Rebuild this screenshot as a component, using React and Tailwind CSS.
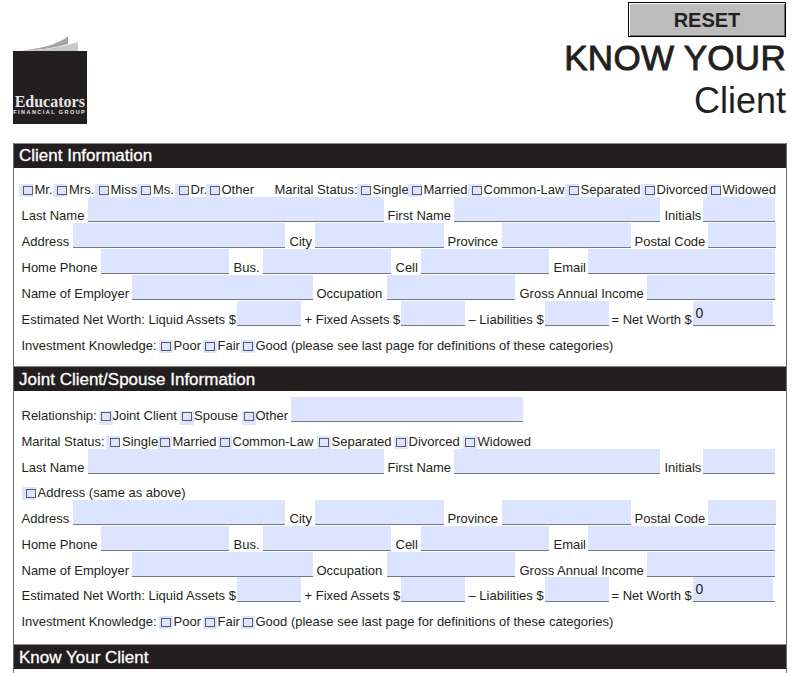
const blue = "bg-[#dde4ff]";

function Field({ className = "", children }) {
  return (
    <div className={`h-[25px] mb-[1px] shrink-0 border-b-[1.5px] border-[#77777f] ${blue} ${className}`}>
      {children}
    </div>
  );
}

function Label({ className = "", children }) {
  return <span className={`shrink-0 whitespace-nowrap ${className}`}>{children}</span>;
}

// tall: blue patch hangs below the row, center: mark sits in the middle of the patch
function Check({ className = "", label, tall, center }) {
  const patch = tall
    ? "justify-center h-[14.5px] pt-[1px] mr-0 mb-[-2px]"
    : center
      ? "justify-center h-[13px] pt-[1.5px] mr-[1px]"
      : "justify-end h-[13px] pt-[1.5px] mr-[2px]";
  return (
    <span className={`flex items-end shrink-0 whitespace-nowrap ${className}`}>
      <span className={`flex items-start w-[14px] shrink-0 ${blue} ${patch}`}>
        <span className="block w-[10px] h-[9.5px] border border-[#5a5a62]" />
      </span>
      {label}
    </span>
  );
}

function Row({ className = "", children }) {
  return <div className={`flex items-end h-[26px] ${className}`}>{children}</div>;
}

function SectionBar({ title, className = "leading-[24px]" }) {
  return (
    <div className={`h-[25px] bg-[#231f20] border-t border-[#8a8a8a] pl-[5px] text-white text-[17px] whitespace-nowrap [-webkit-text-stroke:0.3px_#ffffff] ${className}`}>
      {title}
    </div>
  );
}

function NameRow() {
  return (
    <Row>
      <Label className="w-[66px]">Last Name</Label>
      <Field className="w-[296px]" />
      <Label className="w-[70px] pl-[4px]">First Name</Label>
      <Field className="w-[206px]" />
      <Label className="w-[43px] pl-[5px]">Initials</Label>
      <Field className="w-[72px]" />
    </Row>
  );
}

function ContactRows() {
  return (
    <>
      <Row>
        <Label className="w-[51px]">Address</Label>
        <Field className="w-[212px]" />
        <Label className="w-[30px] pl-[5px]">City</Label>
        <Field className="w-[129px]" />
        <Label className="w-[58px] pl-[4px]">Province</Label>
        <Field className="w-[129px]" />
        <Label className="w-[77px] pl-[4px]">Postal Code</Label>
        <Field className="w-[68px]" />
      </Row>
      <Row>
        <Label className="w-[79px]">Home Phone</Label>
        <Field className="w-[128px]" />
        <Label className="w-[34px] pl-[5px]">Bus.</Label>
        <Field className="w-[128px]" />
        <Label className="w-[30px] pl-[5px]">Cell</Label>
        <Field className="w-[128px]" />
        <Label className="w-[39px] pl-[5px]">Email</Label>
        <Field className="w-[187px]" />
      </Row>
      <Row>
        <Label className="w-[110px]">Name of Employer</Label>
        <Field className="w-[181px]" />
        <Label className="w-[74px] pl-[4px]">Occupation</Label>
        <Field className="w-[128px]" />
        <Label className="w-[132px] pl-[5px]">Gross Annual Income</Label>
        <Field className="w-[128px]" />
      </Row>
    </>
  );
}

function WorthRows({ className = "" }) {
  return (
    <div className={className}>
      <Row>
        <Label className="w-[215px]">Estimated Net Worth: Liquid Assets $</Label>
        <Field className="w-[64px]" />
        <Label className="w-[100px] pl-[4px]">+ Fixed Assets $</Label>
        <Field className="w-[64px]" />
        <Label className="w-[80px] pl-[4px]">– Liabilities $</Label>
        <Field className="w-[64px]" />
        <Label className="w-[84px] pl-[3px]">= Net Worth $</Label>
        <div className="w-[82px] h-[25px] mb-[1px] shrink-0 border-b-[1.5px] border-[#77777f]">
          <div className={`w-[80px] h-[23.5px] pl-[3px] pt-[5px] text-[14px] leading-[14px] ${blue}`}>0</div>
        </div>
      </Row>
      <Row>
        <Label className="w-[137px]">Investment Knowledge:</Label>
        <Check className="w-[44px]" label="Poor" center />
        <Check className="w-[38px]" label="Fair" center />
        <Check label="Good (please see last page for definitions of these categories)" center />
      </Row>
    </div>
  );
}

function Logo() {
  return (
    <div className="w-[73.5px] mt-[35.5px]">
      <svg width="74" height="15" viewBox="0 0 74 15" className="block">
        <path d="M10 15 C30 14 50 11 65 6 L65 15 Z" fill="#c4c9cc" />
        <path d="M5 15 C25 13 45 9 55 0 L55 8 C45 11 30 14 5 15 Z" fill="#a3a5a7" />
      </svg>
      <div className="h-[73.5px] bg-[#231f20] flex flex-col justify-end items-center pb-[8px] text-[#e8e8e8]">
        <span className="font-['Liberation_Serif',serif] font-bold text-[16px] leading-[15px]">Educators</span>
        <span className="text-[5.5px] font-bold tracking-[1.45px] leading-[7px] whitespace-nowrap">FINANCIAL GROUP</span>
      </div>
    </div>
  );
}

export default function App() {
  return (
    <div className="w-[800px] h-[673px] overflow-hidden bg-white text-[#231f20] text-[13px] leading-[15px] font-['Liberation_Sans',Arial,sans-serif]">
      {/* Top: logo and title */}
      <div className="flex justify-between h-[143px] pl-[13px] pr-[14px]">
        <Logo />
        <div className="flex flex-col items-end pt-[2px]">
          <button className="w-[158px] h-[35px] border border-black bg-[#bdbdbd] shadow-[inset_1px_1px_0_#ffffff,inset_-1px_-1px_0_#6e6e6e] text-[20px] font-bold leading-[30px] text-center">
            RESET
          </button>
          <div className="mt-[1px] text-[35px] tracking-[0.3px] leading-[40px] whitespace-nowrap [-webkit-text-stroke:0.9px_#231f20]">KNOW YOUR</div>
          <div className="mt-[2px] text-[36px] leading-[42px] whitespace-nowrap">Client</div>
        </div>
      </div>

      <div className="ml-[13px] w-[774px] border-x-[1.5px] border-[#6b6b6b]">
        <SectionBar title="Client Information" />
        <div className="pl-[7.5px] pt-[3px] pb-[13px]">
          <Row className="ml-[-3px]">
            <Check className="w-[34.5px]" label="Mr." />
            <Check className="w-[41.5px]" label="Mrs." />
            <Check className="w-[42.5px]" label="Miss" />
            <Check className="w-[37.5px]" label="Ms." />
            <Check className="w-[31px]" label="Dr." />
            <Check className="w-[69px]" label="Other" />
            <Label className="w-[82px]">Marital Status:</Label>
            <Check className="w-[51px]" label="Single" />
            <Check className="w-[60px]" label="Married" />
            <Check className="w-[97px]" label="Common-Law" />
            <Check className="w-[76px]" label="Separated" />
            <Check className="w-[66px]" label="Divorced" />
            <Check label="Widowed" />
          </Row>
          <NameRow />
          <ContactRows />
          <WorthRows />
        </div>

        <SectionBar title="Joint Client/Spouse Information" className="leading-[25px]" />
        <div className="pl-[7.5px] pt-[6px] pb-[15px]">
          <Row>
            <Label className="w-[77px]">Relationship:</Label>
            <Check className="w-[81.5px]" label="Joint Client" tall />
            <Check className="w-[61.5px]" label="Spouse" tall />
            <Check className="w-[49px]" label="Other" tall />
            <Field className="w-[232px]" />
          </Row>
          <Row>
            <Label className="w-[84.5px]">Marital Status:</Label>
            <Check className="w-[51.5px]" label="Single" />
            <Check className="w-[60px]" label="Married" center />
            <Check className="w-[99px]" label="Common-Law" center />
            <Check className="w-[77px]" label="Separated" center />
            <Check className="w-[69px]" label="Divorced" center />
            <Check label="Widowed" center />
          </Row>
          <NameRow />
          <Row className="mt-[-1px]">
            <Check label="Address (same as above)" />
          </Row>
          <ContactRows />
          <WorthRows className="mt-[-1px]" />
        </div>

        <SectionBar title="Know Your Client" className="leading-[25px]" />
        <div className="h-[20px]" />
      </div>
    </div>
  );
}
